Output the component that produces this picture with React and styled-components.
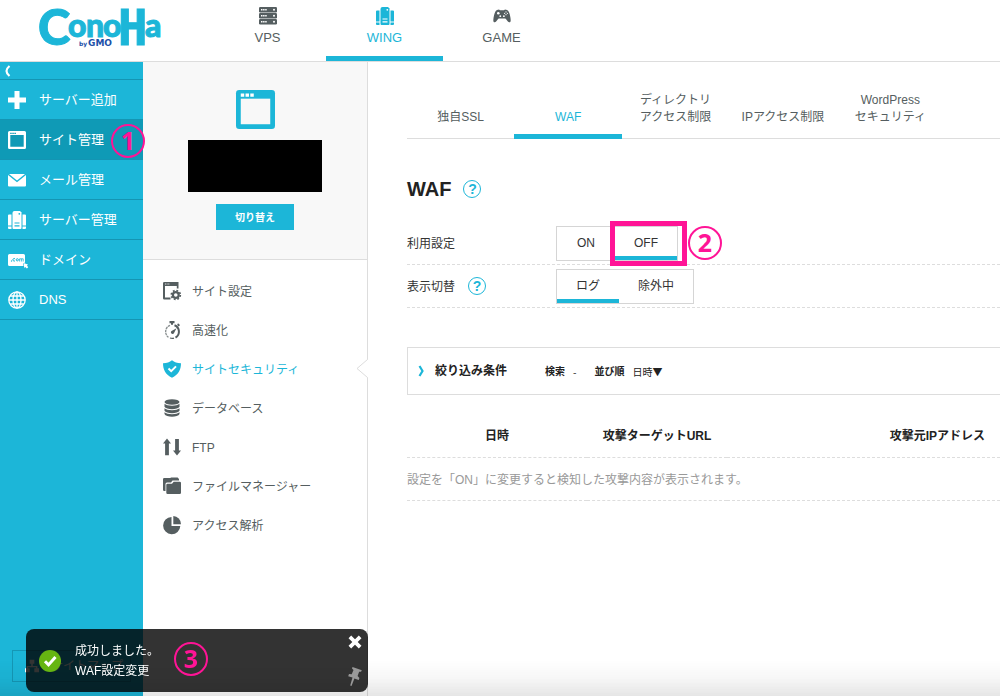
import React, { useState } from 'react';
import styled, { createGlobalStyle } from 'styled-components';

const cyan = '#1cb6d8';
const pink = '#ff1496';
const grey = '#555e60';

const GlobalStyle = createGlobalStyle`
  * {
    box-sizing: border-box;
  }

  body {
    margin: 0;
    background: #fff;
    color: #333;
    font-family: "Liberation Sans", "Noto Sans CJK JP", sans-serif;
    font-size: 12px;
    line-height: 17px;
  }

  a {
    color: inherit;
    text-decoration: none;
  }

  button {
    padding: 0;
    border: 0;
    background: none;
    color: inherit;
    font: inherit;
    cursor: pointer;
  }

  svg {
    display: block;
    flex: none;
    overflow: visible;
  }
`;

const Page = styled.div`
  display: flex;
  flex-direction: column;
  min-height: 100vh;
`;

const Header = styled.header`
  display: flex;
  height: 62px;
  border-bottom: 1px solid #ddd;
`;

const LogoLink = styled.a`
  width: 209px;
  padding: 6px 0 0 38px;
`;

const LogoText = styled.text`
  fill: ${cyan};
  stroke: ${cyan};
  stroke-width: 1px;
  font-family: ${(p) => (p.$narrow ? '"DejaVu Sans Mono"' : 'Lato')}, sans-serif;
  font-weight: 900;
`;

const LogoByline = styled.text`
  fill: #1c50a8;
  font-family: "DejaVu Sans", sans-serif;
  font-weight: bold;
`;

const ServiceNav = styled.nav`
  display: flex;
`;

const ServiceTab = styled.a`
  display: flex;
  flex-direction: column;
  align-items: center;
  gap: 4px;
  width: 117px;
  padding-top: 7px;
  border-bottom: 5px solid ${(p) => (p.$active ? cyan : 'transparent')};
  color: ${(p) => (p.$active ? cyan : grey)};
  font-size: 13px;
`;

const Body = styled.div`
  display: flex;
  flex: 1;
`;

const Sidebar = styled.nav`
  display: flex;
  flex-direction: column;
  flex: none;
  width: 143px;
  background: ${cyan};
  color: #fff;
`;

const Collapse = styled.button`
  display: flex;
  align-items: center;
  height: 18px;
  padding-left: 4px;
  border-bottom: 1px solid #1495b3;
`;

const SideItem = styled.a`
  position: relative;
  display: flex;
  align-items: center;
  gap: 13px;
  height: 40px;
  padding-left: 8px;
  border-bottom: 1px solid #1495b3;
  background: ${(p) => (p.$active ? '#0f9ab6' : 'transparent')};
  font-size: 13px;
`;

const Sitemap = styled.a`
  display: flex;
  align-items: center;
  gap: 12px;
  height: 32px;
  margin: auto 12px 14px;
  padding-left: 12px;
  border: 1px solid #1597b5;
`;

const SubPanel = styled.aside`
  flex: none;
  width: 225px;
  border-right: 1px solid #ddd;
`;

const SiteBox = styled.div`
  display: flex;
  flex-direction: column;
  align-items: center;
  height: 198px;
  padding-top: 28px;
  border-bottom: 1px solid #ddd;
  background: #f8f8f8;
`;

const SiteName = styled.div`
  width: 134px;
  height: 52px;
  margin: 11px 0 12px;
  background: #000;
`;

const SwitchButton = styled.button`
  width: 78px;
  height: 26px;
  background: ${cyan};
  color: #fff;
  font-size: 10px;
  font-weight: bold;
`;

const SubMenu = styled.nav`
  padding-top: 11px;
`;

const SubItem = styled.a`
  position: relative;
  display: flex;
  align-items: center;
  gap: 11px;
  height: 39px;
  padding-left: 20px;
  color: ${(p) => (p.$active ? cyan : grey)};
`;

const Label = styled.span`
  padding-top: 3px;
`;

const Notch = styled.svg`
  position: absolute;
  top: 10px;
  right: -1px;
`;

const Main = styled.main`
  flex: 1;
  min-width: 0;
  padding: 28px 0 0 39px;
`;

const Tabs = styled.nav`
  display: flex;
  padding-right: 56px;
  border-bottom: 1px solid #ddd;
`;

const Tab = styled.a`
  display: flex;
  align-items: flex-end;
  justify-content: center;
  flex: 1;
  height: 49px;
  margin-bottom: -1px;
  padding-bottom: 8px;
  border-bottom: 5px solid ${(p) => (p.$active ? cyan : 'transparent')};
  color: ${(p) => (p.$active ? cyan : grey)};
  text-align: center;
  white-space: pre;
`;

const Title = styled.div`
  display: flex;
  align-items: center;
  gap: 12px;
  margin: 38px 0 21px;

  h1 {
    margin: 0;
    color: #222;
    font-size: 20px;
    line-height: 24px;
  }
`;

const Help = styled.button`
  width: 18px;
  height: 18px;
  border: 1px solid ${cyan};
  border-radius: 50%;
  color: ${cyan};
  font-size: 14px;
  font-weight: bold;
  line-height: 16px;
`;

const SettingRow = styled.div`
  display: flex;
  align-items: center;
  height: 43px;
  border-bottom: 1px dashed #ddd;
`;

const SettingLabel = styled.div`
  display: flex;
  align-items: center;
  gap: 13px;
  width: 149px;
`;

const Toggle = styled.div`
  display: flex;
  height: 35px;
  border: 1px solid #d5d5d5;
`;

const Option = styled.button`
  position: relative;
  min-width: ${(p) => (p.$narrow ? 58 : 62)}px;
  padding: 0 ${(p) => (p.$wide ? 19 : 0)}px;
  border-top: 4px solid transparent;
  border-bottom: 4px solid ${(p) => (p['aria-pressed'] ? cyan : 'transparent')};
  color: #333;
  line-height: 25px;
`;

// numbered step, drawn over the control it belongs to
const Marker = styled.span`
  position: absolute;
  top: ${(p) => p.$top}px;
  left: ${(p) => p.$left}px;
  width: 34px;
  height: 34px;
  border: 2px solid ${pink};
  border-radius: 50%;
  color: ${pink};
  font-family: "Open Sans", "Noto Sans", sans-serif;
  font-size: 25px;
  font-weight: 700;
  line-height: 28px;
  text-align: center;
  z-index: 2;
`;

const Highlight = styled.span`
  position: absolute;
  top: -10px;
  left: -5px;
  width: 77px;
  height: 45px;
  border: 5px solid ${pink};
`;

const Filter = styled.section`
  display: flex;
  align-items: center;
  height: 48px;
  margin-top: 39px;
  padding: 0 10px;
  border: 1px solid #ddd;
  border-right: 0;
  color: #222;
  font-size: 10px;

  h2 {
    margin: 0 38px 0 10px;
    font-size: 12px;
  }

  dl {
    display: flex;
    margin: 0;
  }

  dt {
    font-weight: bold;
  }

  dd {
    margin: 0 18px 0 8px;
    font-family: "Noto Sans CJK JP", sans-serif;
  }
`;

const LogTable = styled.table`
  width: 100%;
  margin-top: 19px;
  border-collapse: collapse;

  th,
  td {
    height: 43px;
    padding: 3px 0 0;
    border-bottom: 1px dashed #ddd;
    white-space: nowrap;
  }

  th {
    color: #222;
  }

  th:nth-child(1) {
    width: 180px;
  }

  th:nth-child(2) {
    width: 140px;
  }

  th:nth-child(3) {
    padding-right: 15px;
    text-align: right;
  }

  td {
    color: #999;
  }
`;

const Toast = styled.div`
  position: fixed;
  bottom: 4px;
  left: 26px;
  display: flex;
  align-items: center;
  gap: 14px;
  width: 342px;
  height: 63px;
  padding-left: 13px;
  border-radius: 8px;
  background: rgba(0, 0, 0, 0.8);
  color: #fff;
  line-height: 20px;
  z-index: 3;

  p {
    margin: 0;
  }
`;

const ToastActions = styled.div`
  display: flex;
  flex-direction: column;
  align-items: center;
  justify-content: space-between;
  height: 51px;
  margin: 0 6px 0 auto;
`;

const BottomFade = styled.div`
  position: fixed;
  right: 0;
  bottom: 0;
  left: 0;
  height: 36px;
  background: linear-gradient(rgba(0, 0, 0, 0), rgba(0, 0, 0, 0.03) 50%, rgba(0, 0, 0, 0.1));
  pointer-events: none;
`;

const Svg = ({ size = 18, children }) => (
  <svg width={size} height={size} viewBox="0 0 18 18" fill="currentColor" aria-hidden="true">
    {children}
  </svg>
);

const Logo = () => (
  <svg width="128" height="50" viewBox="0 0 128 50" role="img" aria-label="ConoHa by GMO">
    <LogoText x="0" y="39" fontSize="49">C</LogoText>
    <LogoText x="30" y="31" fontSize="32">o</LogoText>
    <LogoText x="48" y="31" fontSize="32">n</LogoText>
    <LogoText x="65" y="31" fontSize="32">o</LogoText>
    <LogoText x="80" y="39" fontSize="49" $narrow>H</LogoText>
    <LogoText x="107" y="31" fontSize="32">a</LogoText>
    <LogoByline x="41" y="40" fontSize="6">by</LogoByline>
    <LogoByline x="50" y="40" fontSize="9">GMO</LogoByline>
  </svg>
);

const RackIcon = () => (
  <Svg>
    {[0, 6, 12].map((y) => (
      <g key={y}>
        <rect y={y} width="18" height="5.4" rx="1.2" />
        <path d={`M2 ${y + 2.7}h6`} stroke="#fff" strokeWidth="1.4" strokeDasharray="1.5 .6" />
        <circle cx="15" cy={y + 2.7} r="1" fill="#fff" />
      </g>
    ))}
  </Svg>
);

const ServersIcon = ({ hole }) => (
  <Svg>
    <path d="M6.500 0H12l1.500 1.500V17a1 1 0 0 1-1 1h-7a1 1 0 0 1-1-1V2a2 2 0 0 1 2-2z" />
    <path d="M1 3.500h2.500v11H0V4.500a1 1 0 0 1 1-1zM0 15.500h3.500V18H1a1 1 0 0 1-1-1zM14.500 3.500H17a1 1 0 0 1 1 1v10h-3.500zM14.500 15.500H18V17a1 1 0 0 1-1 1h-2.500z" />
    <path d="M6.500 12h5M6.500 14.800h5" stroke={hole} strokeWidth="1.200" />
    <circle cx="11.300" cy="2.800" r=".9" fill={hole} />
  </Svg>
);

const PadIcon = () => (
  <Svg>
    <path d="M4 3 6 2.500l1 .8h4l1-.8 2 .5c1.500.8 2.500 3 3 5.500.5 2.500 1.300 5.800 0 6.700-1.500.7-2.700-1.300-3.900-3-.5-.6-1-.7-1.500-.7H6.400c-.5 0-1 .1-1.500.7C3.700 13.900 2.500 15.900 1 15.200-.3 14.300.5 11 1 8.500 1.500 6 2.500 3.800 4 3z" />
    <g fill="#fff">
      <circle cx="5.300" cy="6.300" r="1.300" />
      <circle cx="7.300" cy="9.200" r=".9" />
      <circle cx="10.900" cy="9.200" r=".9" />
      <circle cx="13" cy="4.900" r=".6" />
      <circle cx="13" cy="7.700" r=".6" />
      <circle cx="11.600" cy="6.300" r=".6" />
      <circle cx="14.400" cy="6.300" r=".6" />
    </g>
  </Svg>
);

const PlusIcon = () => (
  <Svg><path d="M6.500 0h5v6.500H18v5h-6.500V18h-5v-6.500H0v-5h6.500z" /></Svg>
);

const WindowIcon = ({ hole }) => (
  <Svg>
    <path fillRule="evenodd" d="M1.500 0h15A1.500 1.500 0 0 1 18 1.500v15a1.500 1.500 0 0 1-1.500 1.500h-15A1.500 1.500 0 0 1 0 16.500v-15A1.500 1.500 0 0 1 1.500 0zM2.300 4v11.700h13.400V4z" />
    <path d="M2.200 2.300h6" stroke={hole} strokeWidth="1.300" strokeDasharray="1.500 .6" />
  </Svg>
);

const MailIcon = () => (
  <Svg>
    <path d="M1 3h16L9 9.500zM0 4l9 7.300L18 4v10.500a1 1 0 0 1-1 1H1a1 1 0 0 1-1-1z" />
  </Svg>
);

const DomainIcon = () => (
  <Svg>
    <path d="M1.500 3h14A1.500 1.500 0 0 1 17 4.500v7l-2 1 .5 2.500h-14A1.500 1.500 0 0 1 0 13.500v-9A1.500 1.500 0 0 1 1.500 3z" />
    <path d="m15.500 12 4.500 1.500-1 1 1.200 1.800-1.300 1.200-1.700-1.400-.9.900z" />
    <circle cx="3.500" cy="10" r=".7" fill={cyan} />
    <path d="M7 7.800a1.300 1.300 0 1 0 0 2" fill="none" stroke={cyan} />
    <circle cx="9.300" cy="8.800" r="1.100" fill="none" stroke={cyan} />
    <path d="M11.600 10.500V7.800h3.600v2.700M13.400 8v2.500" fill="none" stroke={cyan} strokeWidth=".8" />
  </Svg>
);

const GlobeIcon = () => (
  <Svg>
    <g fill="none" stroke="currentColor" strokeWidth="1.300">
      <circle cx="9" cy="9" r="8.200" />
      <ellipse cx="9" cy="9" rx="4" ry="8.200" />
      <path d="M9 1v16M1 9h16M2.200 5h13.600M2.200 13h13.600" />
    </g>
  </Svg>
);

const SiteGearIcon = () => (
  <Svg>
    <path d="M1.200 0h14.300v6.500h-1.700V4H2v11.500h5.500v2H1.200A1.200 1.200 0 0 1 0 16.300V1.200A1.200 1.200 0 0 1 1.200 0z" />
    <path d="M2 2h5" stroke="#fff" strokeWidth=".8" strokeDasharray="1 .6" />
    <circle cx="12.800" cy="13" r="2.900" fill="none" stroke="currentColor" strokeWidth="2.200" />
    <circle cx="12.800" cy="13" r="4.500" fill="none" stroke="currentColor" strokeWidth="1.700" strokeDasharray="1.800 1.734" />
  </Svg>
);

const StopwatchIcon = () => (
  <Svg>
    <path d="M6.500 0h5v2.200H10v1.500H8V2.200H6.500zM15 2.300l2 1.700-1.200 1.400-1.700-1.500z" />
    <g fill="none" stroke="currentColor">
      <path d="M11.500 4.300a6.900 6.900 0 0 1 1 12.400" strokeWidth="2" />
      <path d="M11 17.200a6.900 6.900 0 0 1-4-.2" strokeWidth="1.300" />
      <path d="M7 4.300A6.900 6.900 0 0 0 5.500 16.300" strokeWidth="1.300" strokeDasharray="2.500 .6" opacity=".7" />
    </g>
    <path d="m13.500 7.300-2.300 4.500a1.700 1.700 0 1 1-2.200-2.100z" />
  </Svg>
);

const ShieldIcon = () => (
  <Svg>
    <path d="M9 .3c2.500 2 5 2.800 9 3 0 6.500-2.500 11.300-9 14.500C2.500 14.600 0 9.800 0 3.300c4-.2 6.500-1 9-3z" />
    <path d="m5.500 8.500 2.700 2.700L13 6.400" fill="none" stroke="#fff" strokeWidth="2" />
  </Svg>
);

const DatabaseIcon = () => (
  <Svg>
    <ellipse cx="9" cy="3" rx="7.500" ry="2.800" />
    <path d="M1.500 4.800c2.500 2.600 12.500 2.600 15 0v3c-1.500 3.200-13.500 3.200-15 0zM1.500 9.300c2.500 2.600 12.500 2.600 15 0v2.500c-1.500 3.200-13.500 3.200-15 0zM1.500 13.200c2.500 2.600 12.500 2.600 15 0V15c-1.500 3.500-13.500 3.500-15 0z" />
  </Svg>
);

const TransferIcon = () => (
  <Svg>
    <path d="m4 .5 4 5H5.900v11.700H2.100V5.500H0zM14 17.500l-4-5h2.100V1h3.800v11.500H18z" />
  </Svg>
);

const FolderIcon = () => (
  <Svg>
    <path d="M1.200 1h6l.9-.5h6.500L16 2v1.500H9.500l-1.500 2H4a1.500 1.500 0 0 0-1.500 1.500v7H1.200A1.200 1.200 0 0 1 0 12.800V2.200A1.200 1.200 0 0 1 1.200 1z" />
    <path d="M4.500 6.700H9l1.700-2h6A1.300 1.300 0 0 1 18 6v9.700a1.300 1.300 0 0 1-1.300 1.300H4.500a1.200 1.200 0 0 1-1.200-1.200V7.900a1.200 1.200 0 0 1 1.200-1.200z" />
  </Svg>
);

const PieIcon = () => (
  <Svg>
    <path d="M8.500 1v9h8.800A8.600 8.600 0 1 1 8.500 1z" />
    <path d="M10.300 0A8.300 8.300 0 0 1 18 8.200h-7.700z" />
  </Svg>
);

const ChevronIcon = ({ flip, color }) => (
  <svg width="7" height="12" viewBox="0 0 7 12" aria-hidden="true">
    <path d={flip ? 'M5.500 1Q2.500 3.500 2.500 6t3 5' : 'M1.500 1 4.500 6l-3 5'} fill="none" stroke={color} strokeWidth="2.200" />
  </svg>
);

const SitemapIcon = () => (
  <Svg size={14}>
    <path d="M6 1h6v5h-2v3h6v3h2v5h-6v-5h2v-1.500H4V12h2v5H0v-5h2V9h6V6H6z" />
  </Svg>
);

const CheckIcon = () => (
  <svg width="22" height="22" viewBox="0 0 22 22" aria-hidden="true">
    <circle cx="11" cy="11" r="11" fill="#66b512" />
    <path d="m6 11.300 3.500 3.600L16.500 7" fill="none" stroke="#fff" strokeWidth="3" />
  </svg>
);

const CloseIcon = () => (
  <svg width="14" height="14" viewBox="0 0 15 15" aria-hidden="true">
    <path d="m2 2 11 11M13 2 2 13" stroke="#fff" strokeWidth="4" />
  </svg>
);

const PinIcon = () => (
  <svg width="14" height="19" viewBox="0 0 14 19" fill="#999" aria-hidden="true">
    <path d="m4.500 0 9.300 3.300-.8 1.500-1.900-.1-1.500 4.400 1.800 1.900-.7 2-4.300-1.500L3.500 19l-1.300-.4 2.300-8L.200 9.200l.8-2.200 2.700.2L5.500 3 4 1.500z" />
  </svg>
);

const sideItems = [
  { label: 'サーバー追加', icon: <PlusIcon /> },
  { label: 'サイト管理', icon: <WindowIcon hole="#0f9ab6" />, active: true, step: 1 },
  { label: 'メール管理', icon: <MailIcon /> },
  { label: 'サーバー管理', icon: <ServersIcon hole={cyan} /> },
  { label: 'ドメイン', icon: <DomainIcon /> },
  { label: 'DNS', icon: <GlobeIcon /> },
];

const subItems = [
  { label: 'サイト設定', icon: <SiteGearIcon /> },
  { label: '高速化', icon: <StopwatchIcon /> },
  { label: 'サイトセキュリティ', icon: <ShieldIcon />, active: true },
  { label: 'データベース', icon: <DatabaseIcon /> },
  { label: 'FTP', icon: <TransferIcon /> },
  { label: 'ファイルマネージャー', icon: <FolderIcon /> },
  { label: 'アクセス解析', icon: <PieIcon /> },
];

const tabs = ['独自SSL', 'WAF', 'ディレクトリ\nアクセス制限', 'IPアクセス制限', 'WordPress\nセキュリティ'];

function App() {
  const [waf, setWaf] = useState(false);
  const [view, setView] = useState('log');
  const [toast, setToast] = useState(true);

  return (
    <Page>
      <GlobalStyle />
      <Header>
        <LogoLink href="#"><Logo /></LogoLink>
        <ServiceNav>
          <ServiceTab href="#"><RackIcon />VPS</ServiceTab>
          <ServiceTab href="#" $active><ServersIcon hole="#fff" />WING</ServiceTab>
          <ServiceTab href="#"><PadIcon />GAME</ServiceTab>
        </ServiceNav>
      </Header>

      <Body>
        <Sidebar>
          <Collapse aria-label="メニューを閉じる"><ChevronIcon flip color="#fff" /></Collapse>
          {sideItems.map((item) => (
            <SideItem key={item.label} href="#" $active={item.active}>
              {item.icon}
              {item.label}
              {item.step && <Marker $top={4} $left={111}>{item.step}</Marker>}
            </SideItem>
          ))}
          <Sitemap href="#"><SitemapIcon />サイトマップ</Sitemap>
        </Sidebar>

        <SubPanel>
          <SiteBox>
            <Svg size={39}>
              <rect width="18" height="18" rx="1.500" fill={cyan} />
              <path d="M2.200 4h13.600v11.800H2.200z" fill="#f8f8f8" />
              <path d="M2.200 2.400h6.200" stroke="#fff" strokeWidth="1.500" strokeDasharray="1.600 .6" />
            </Svg>
            <SiteName />
            <SwitchButton>切り替え</SwitchButton>
          </SiteBox>
          <SubMenu>
            {subItems.map((item) => (
              <SubItem key={item.label} href="#" $active={item.active}>
                {item.icon}
                <Label>{item.label}</Label>
                {item.active && (
                  <Notch width="12" height="19" viewBox="0 0 12 19">
                    <path d="M12 0v19L1 9.500z" fill="#fff" />
                    <path d="M11.500 0v.5L1 9.500l10.500 9v.5" fill="none" stroke="#ddd" />
                  </Notch>
                )}
              </SubItem>
            ))}
          </SubMenu>
        </SubPanel>

        <Main>
          <Tabs>
            {tabs.map((tab) => (
              <Tab key={tab} href="#" $active={tab === 'WAF'}>{tab}</Tab>
            ))}
          </Tabs>

          <Title>
            <h1>WAF</h1>
            <Help aria-label="WAFのヘルプ">?</Help>
          </Title>

          <SettingRow>
            <SettingLabel><Label>利用設定</Label></SettingLabel>
            <Toggle role="group" aria-label="利用設定">
              <Option $narrow aria-pressed={waf} onClick={() => setWaf(true)}>ON</Option>
              <Option aria-pressed={!waf} onClick={() => setWaf(false)}>
                OFF
                <Highlight />
                <Marker $top={-5} $left={73}>2</Marker>
              </Option>
            </Toggle>
          </SettingRow>
          <SettingRow>
            <SettingLabel>
              <Label>表示切替</Label>
              <Help aria-label="表示切替のヘルプ">?</Help>
            </SettingLabel>
            <Toggle role="group" aria-label="表示切替">
              <Option aria-pressed={view === 'log'} onClick={() => setView('log')}>ログ</Option>
              <Option $wide aria-pressed={view === 'excluded'} onClick={() => setView('excluded')}>除外中</Option>
            </Toggle>
          </SettingRow>

          <Filter>
            <ChevronIcon color={cyan} />
            <h2>絞り込み条件</h2>
            <dl>
              <dt>検索</dt>
              <dd>-</dd>
              <dt>並び順</dt>
              <dd>日時▼</dd>
            </dl>
          </Filter>

          <LogTable>
            <thead>
              <tr>
                <th>日時</th>
                <th>攻撃ターゲットURL</th>
                <th>攻撃元IPアドレス</th>
              </tr>
            </thead>
            <tbody>
              <tr>
                <td colSpan="3">設定を「ON」に変更すると検知した攻撃内容が表示されます。</td>
              </tr>
            </tbody>
          </LogTable>
        </Main>
      </Body>

      <BottomFade />
      {toast && (
        <Toast role="status">
          <CheckIcon />
          <p>成功しました。<br />WAF設定変更</p>
          <Marker $top={13} $left={148}>3</Marker>
          <ToastActions>
            <button aria-label="閉じる" onClick={() => setToast(false)}><CloseIcon /></button>
            <button aria-label="固定"><PinIcon /></button>
          </ToastActions>
        </Toast>
      )}
    </Page>
  );
}

export default App;
